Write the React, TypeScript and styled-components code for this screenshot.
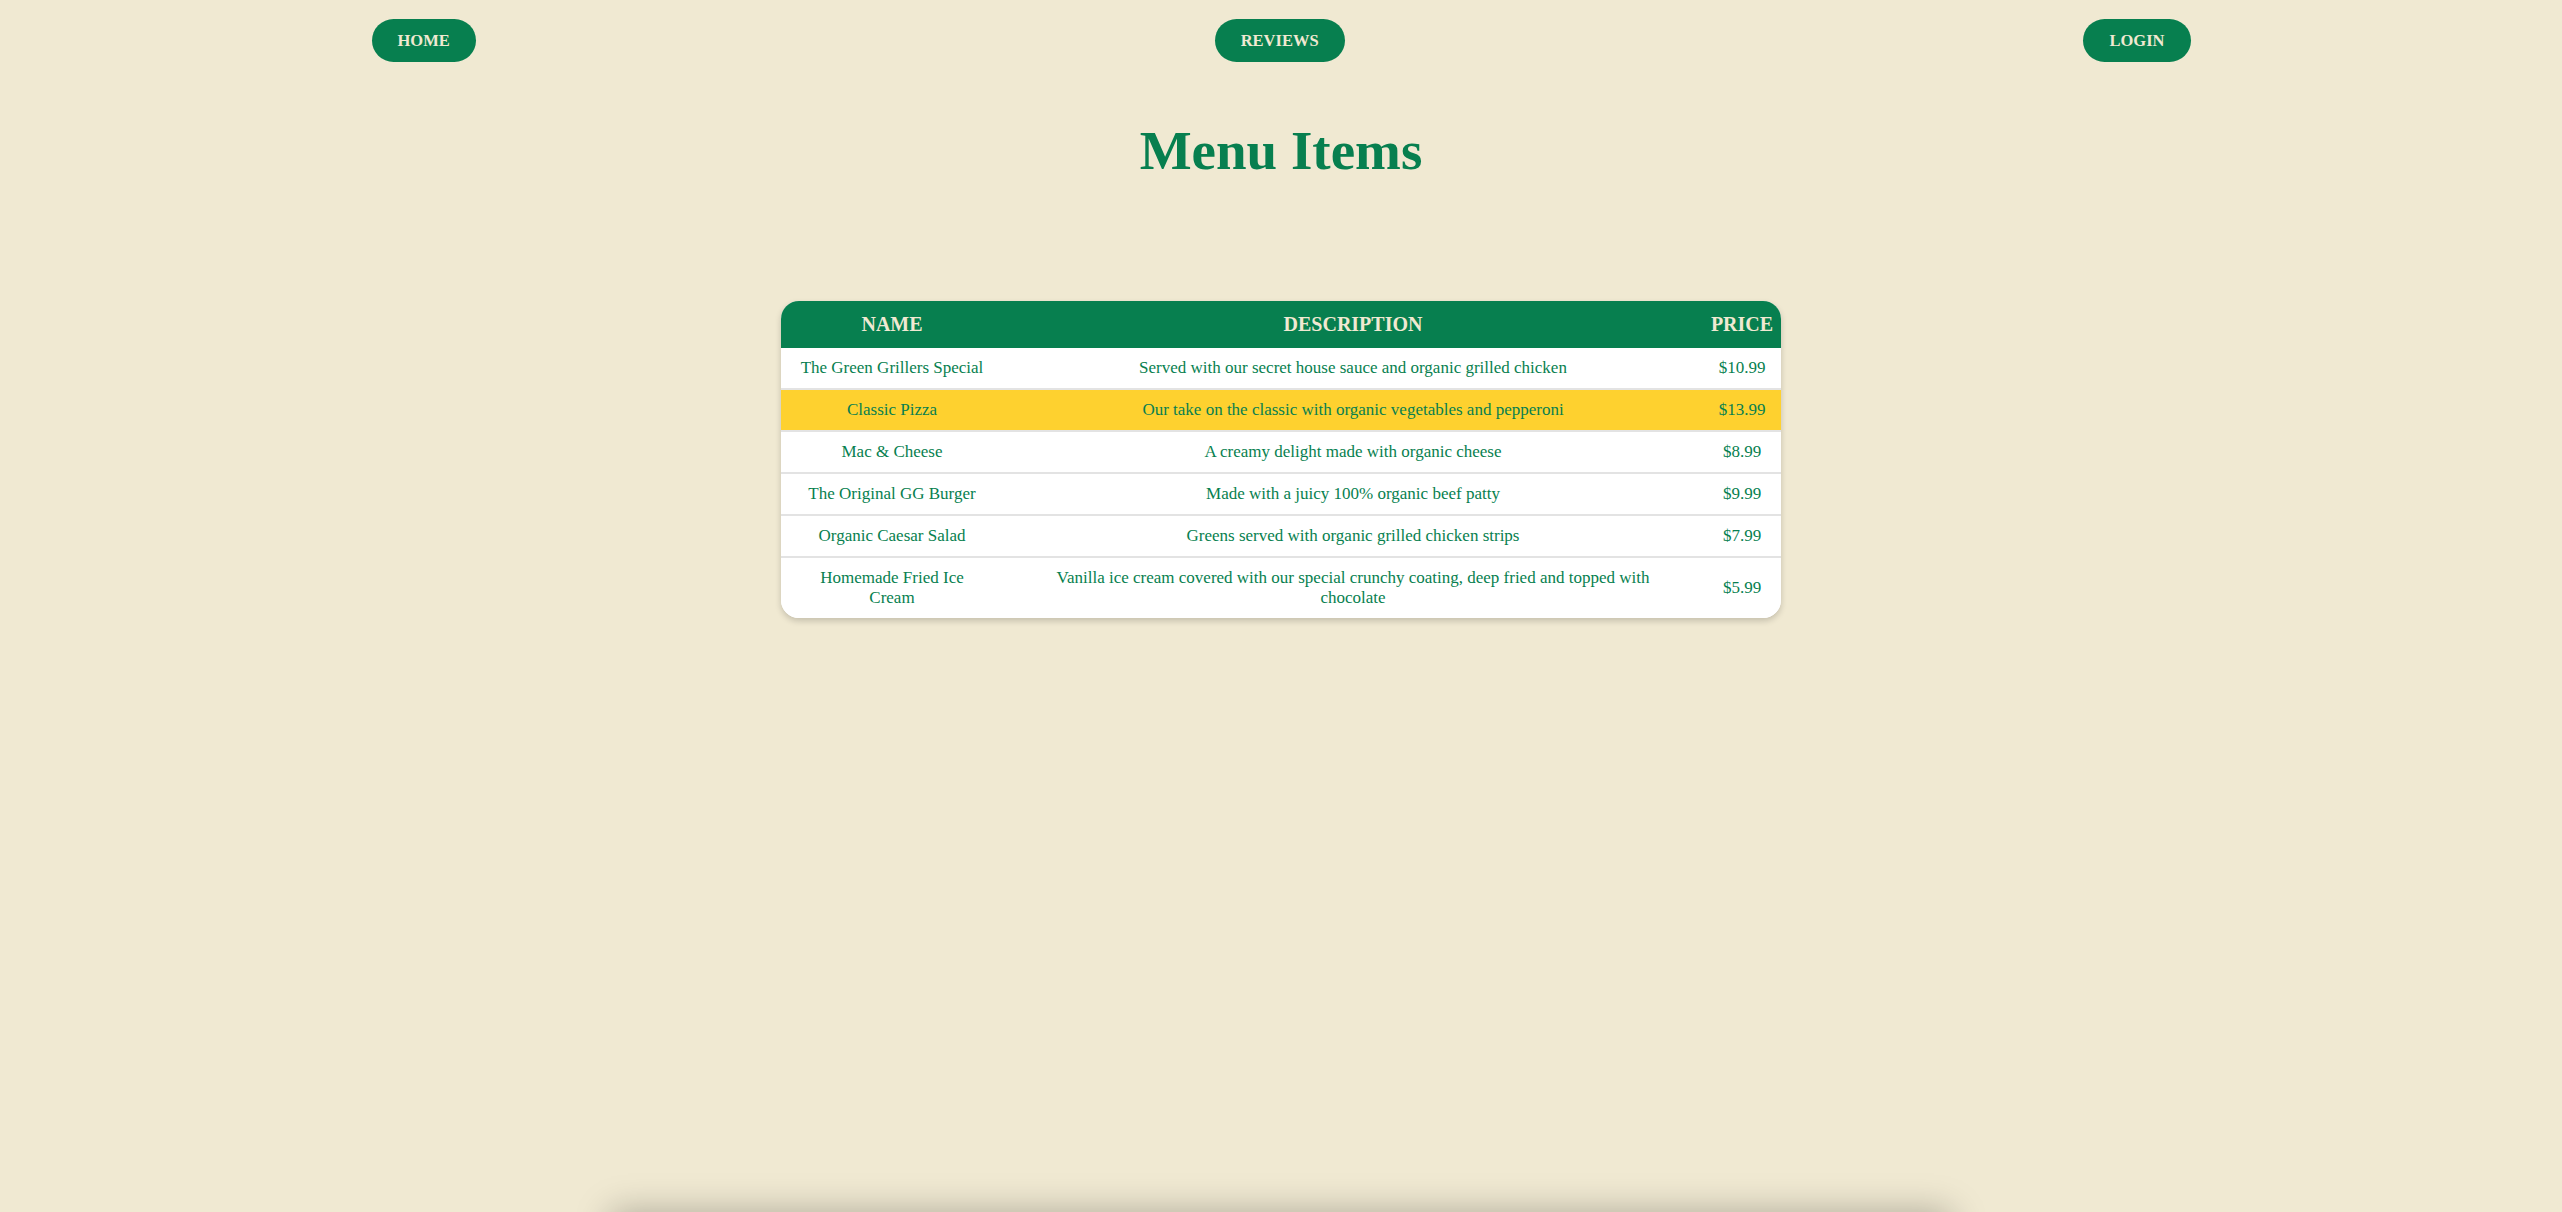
import React from "react";
import styled, { createGlobalStyle } from "styled-components";

const GlobalStyle = createGlobalStyle`
  html, body {
    margin: 0;
    padding: 0;
    background: #f0e9d2;
    font-family: "Liberation Serif", "Times New Roman", serif;
    color: #077f4f;
  }
`;

const green = "#077f4f";
const cream = "#f0e9d2";

const Page = styled.div`
  display: flex;
  flex-direction: column;
  align-items: center;
`;

const Top = styled.div`
  width: 100%;
  min-height: 1212px;
  display: flex;
  flex-direction: column;
  align-items: center;
`;

const Nav = styled.nav`
  width: 1819px;
  display: flex;
  justify-content: space-between;
  align-items: center;
  padding-top: 19px;
`;

const NavButton = styled.button`
  height: 43px;
  padding: 0 26px;
  border: none;
  border-radius: 22px;
  background: ${green};
  color: ${cream};
  font-family: "Liberation Serif", serif;
  font-weight: bold;
  font-size: 16.5px;
  text-transform: uppercase;
  cursor: pointer;
`;

const Title = styled.h1`
  margin: 62px 0 0;
  font-size: 55px;
  line-height: 54px;
  font-weight: bold;
  color: ${green};
`;

const Card = styled.div`
  margin-top: 123px;
  width: 1000px;
  border-radius: 18px;
  overflow: hidden;
  background: #fff;
  box-shadow: 0 3px 6px rgba(0, 0, 0, 0.18);
`;

const Table = styled.table`
  width: 100%;
  border-collapse: collapse;
  table-layout: fixed;
`;

const HeadRow = styled.tr`
  background: ${green};
`;

type Pad = { $pad?: number };

const HeadCell = styled.th<Pad>`
  padding: 12px ${(p) => p.$pad ?? 16}px;
  line-height: 23px;
  font-size: 20px;
  font-weight: bold;
  color: ${cream};
  text-align: center;
`;

const Row = styled.tr<{ $highlight?: boolean }>`
  background: ${(p) => (p.$highlight ? "#fed12f" : "#fff")};
  border-top: 2px solid #e3e3e3;
  &:first-child {
    border-top: none;
  }
`;

const Cell = styled.td<Pad>`
  padding: 10px ${(p) => p.$pad ?? 16}px;
  line-height: 20px;
  font-size: 17px;
  color: ${green};
  text-align: center;
  vertical-align: middle;
`;

const Footer = styled.footer`
  width: 1340px;
  height: 120px;
  background: ${cream};
  box-shadow: 0 0 34px rgba(0, 0, 0, 0.28);
`;

type Item = { name: string; description: string; price: string };

const items: Item[] = [
  { name: "The Green Grillers Special", description: "Served with our secret house sauce and organic grilled chicken", price: "$10.99" },
  { name: "Classic Pizza", description: "Our take on the classic with organic vegetables and pepperoni", price: "$13.99" },
  { name: "Mac & Cheese", description: "A creamy delight made with organic cheese", price: "$8.99" },
  { name: "The Original GG Burger", description: "Made with a juicy 100% organic beef patty", price: "$9.99" },
  { name: "Organic Caesar Salad", description: "Greens served with organic grilled chicken strips", price: "$7.99" },
  {
    name: "Homemade Fried Ice Cream",
    description: "Vanilla ice cream covered with our special crunchy coating, deep fried and topped with chocolate",
    price: "$5.99",
  },
];

export default function App() {
  return (
    <Page>
      <GlobalStyle />
      <Top>
        <Nav>
          <NavButton>Home</NavButton>
          <NavButton>Reviews</NavButton>
          <NavButton>Login</NavButton>
        </Nav>
        <Title>Menu Items</Title>
        <Card>
          <Table>
            <colgroup>
              <col style={{ width: 222 }} />
              <col />
              <col style={{ width: 78 }} />
            </colgroup>
            <thead>
              <HeadRow>
                <HeadCell>NAME</HeadCell>
                <HeadCell $pad={30}>DESCRIPTION</HeadCell>
                <HeadCell $pad={4}>PRICE</HeadCell>
              </HeadRow>
            </thead>
            <tbody>
              {items.map((item, i) => (
                <Row key={item.name} $highlight={i === 1}>
                  <Cell>{item.name}</Cell>
                  <Cell $pad={32}>{item.description}</Cell>
                  <Cell $pad={6}>{item.price}</Cell>
                </Row>
              ))}
            </tbody>
          </Table>
        </Card>
      </Top>
      <Footer />
    </Page>
  );
}
